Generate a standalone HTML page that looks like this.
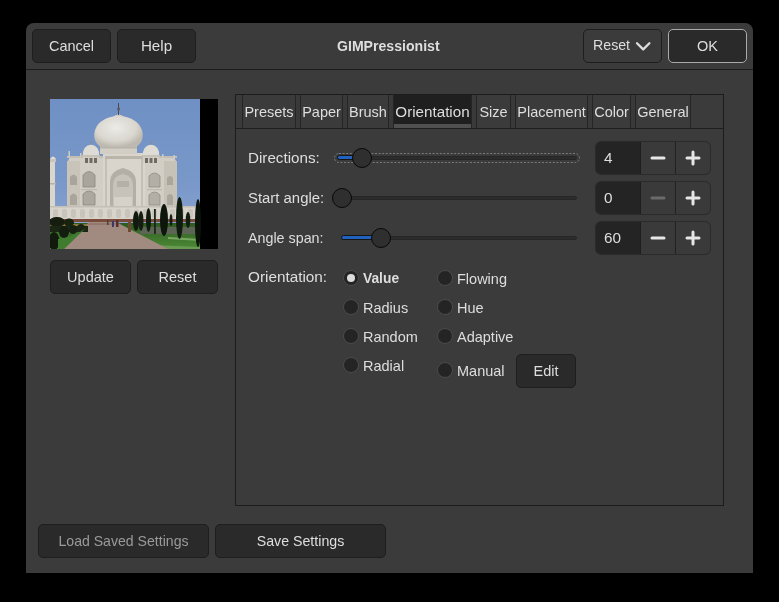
<!DOCTYPE html>
<html><head><meta charset="utf-8">
<style>
*{margin:0;padding:0;box-sizing:border-box}
html,body{width:779px;height:602px;background:#000;overflow:hidden}
body{position:relative;font-family:"Liberation Sans",sans-serif;font-size:14.5px;color:#dedede}
.abs{position:absolute}
.btn,.lbl,.tab{will-change:transform}
#win{position:absolute;left:26px;top:23px;width:727px;height:550px;background:#3b3b3b;border-radius:8px 8px 0 0}
#sep{position:absolute;left:26px;top:69px;width:727px;height:1px;background:#1c1c1c}
.btn{position:absolute;background:#2a2a2a;border:1px solid #1e1e1e;border-radius:5px;display:flex;align-items:center;justify-content:center;white-space:nowrap}
.lbl{position:absolute;white-space:nowrap;line-height:1}
.nb{position:absolute;left:235px;top:94px;width:489px;height:412px;border:1px solid #1c1c1c}
.tabstrip{position:absolute;left:236px;top:95px;width:487px;height:34px;border-bottom:1px solid #1e1e1e}
.tab{position:absolute;top:95px;height:33px;border-left:1px solid #252525;border-right:1px solid #252525;display:flex;align-items:center;justify-content:center;white-space:nowrap}
.tab.act{background:#1f1f1f}
.trough{position:absolute;height:4px;border-radius:2px;background:#2c2c2c;border:1px solid #262626}
.fill{position:absolute;height:5px;border-radius:2.5px;background:#2062bd;border:1px solid #151515}
.knob{position:absolute;width:20px;height:20px;border-radius:50%;background:#2f2f2f;border:1.6px solid #080808}
.spin{position:absolute;left:595px;width:116px;height:34px;border:1px solid #2a2a2a;border-radius:6px;background:#3a3a3a;overflow:hidden}
.spin .ent{position:absolute;left:0;top:0;width:44px;height:32px;background:#242424}
.spin .b1{position:absolute;left:44px;top:0;width:35px;height:32px;border-left:1px solid #1e1e1e}
.spin .b2{position:absolute;left:79px;top:0;width:36px;height:32px;border-left:1px solid #222}
.radio{position:absolute;width:16px;height:16px;border-radius:50%;background:#242424;border:1px solid #4b4b4b}
</style></head><body>
<div id="win"></div>
<div id="sep"></div>

<div class="btn" style="left:32px;top:29px;width:79px;height:34px">Cancel</div>
<div class="btn" style="left:117px;top:29px;width:79px;height:34px;font-size:15.2px;padding-bottom:1.5px">Help</div>
<div class="lbl" style="left:337px;top:38.8px;font-weight:bold;font-size:14.1px">GIMPressionist</div>
<div class="btn" style="left:583px;top:29px;width:79px;height:34px;background:#3b3b3b;border-color:#1e1e1e"></div>
<div class="lbl" style="left:593px;top:38px;font-size:14.2px">Reset</div>
<svg class="abs" style="left:634px;top:40px" width="18" height="12" viewBox="0 0 18 12"><path d="M3 3.2 L9.2 9.4 L15.4 3.2" fill="none" stroke="#dedede" stroke-width="2.3" stroke-linecap="round" stroke-linejoin="round"/></svg>
<div class="btn" style="left:668px;top:29px;width:79px;height:34px;border-color:#aaaaaa">OK</div>

<svg class="abs" style="left:50px;top:99px" width="168" height="150" viewBox="0 0 168 150">
<defs>
<linearGradient id="sky" x1="0" y1="0" x2="0" y2="1"><stop offset="0" stop-color="#6f90c4"/><stop offset="0.6" stop-color="#7a99ca"/><stop offset="1" stop-color="#93aad3"/></linearGradient>
<radialGradient id="dome" cx="0.45" cy="0.4" r="0.6"><stop offset="0" stop-color="#ecebe6"/><stop offset="0.7" stop-color="#d9d6cf"/><stop offset="1" stop-color="#bdb9b0"/></radialGradient>
<linearGradient id="grass" x1="0" y1="0" x2="0" y2="1"><stop offset="0" stop-color="#2f5a22"/><stop offset="1" stop-color="#4c8a36"/></linearGradient>
</defs>
<rect width="168" height="150" fill="#000"/>
<rect width="150" height="150" fill="url(#sky)"/>
<!-- minaret left -->
<rect x="0" y="63" width="5" height="45" fill="#d9d6ce"/>
<rect x="0" y="60" width="6" height="3" fill="#c9c5bc"/>
<path d="M0 60 Q3 55 6 60 Z" fill="#e0ddd6"/>
<rect x="0" y="84" width="6" height="1.5" fill="#b5b1a8"/>
<!-- building main block -->
<path d="M17 64 L20 58 L124 58 L127 64 L127 108 L17 108 Z" fill="#d2cec5"/>
<rect x="17" y="57" width="110" height="2" fill="#c2beb4"/>
<!-- pinnacles -->
<rect x="18.5" y="52" width="1.5" height="6" fill="#cfcbc2"/>
<rect x="30" y="54" width="1.5" height="4" fill="#cfcbc2"/>
<rect x="112" y="55" width="1.5" height="4" fill="#cfcbc2"/>
<rect x="123.5" y="56" width="1.5" height="5" fill="#cfcbc2"/>
<!-- chamfer shading -->
<rect x="17" y="62" width="13" height="46" fill="#c8c4ba"/>
<rect x="114" y="62" width="13" height="46" fill="#c6c2b8"/>
<!-- side bays -->
<path d="M33 88 L33 76 Q39 69 45 76 L45 88 Z" fill="#a9a59c" stroke="#8c887f" stroke-width="0.8"/>
<path d="M33 106 L33 95 Q39 89 45 95 L45 106 Z" fill="#aca89f" stroke="#8c887f" stroke-width="0.8"/>
<path d="M99 88 L99 77 Q104.5 71 110 77 L110 88 Z" fill="#b3afa6" stroke="#918d84" stroke-width="0.8"/>
<path d="M99 106 L99 96 Q104.5 90 110 96 L110 106 Z" fill="#b3afa6" stroke="#918d84" stroke-width="0.8"/>
<path d="M20 86 L20 78 Q23.5 73 27 78 L27 86 Z" fill="#a9a59d"/>
<path d="M20 106 L20 97 Q23.5 92 27 97 L27 106 Z" fill="#a9a59d"/>
<path d="M117 86 L117 79 Q120 75 123 79 L123 86 Z" fill="#aaa69e"/>
<path d="M117 106 L117 97 Q120 93 123 97 L123 106 Z" fill="#aaa69e"/>
<rect x="31" y="90" width="16" height="1.2" fill="#bdb9b0"/>
<rect x="97" y="90" width="15" height="1.2" fill="#bdb9b0"/>
<!-- central pishtaq -->
<rect x="53" y="54" width="42" height="54" fill="#d9d5cc"/>
<rect x="55" y="57" width="38" height="3" fill="#b9b5ab"/>
<rect x="55" y="60" width="2" height="48" fill="#c4c0b6"/>
<rect x="91" y="60" width="2" height="48" fill="#c4c0b6"/>
<path d="M60 108 L60 83 Q60 72 73 69 Q86 72 86 83 L86 108 Z" fill="#b3afa6"/>
<path d="M63 108 L63 86 Q63 77 73 75 Q83 77 83 86 L83 108 Z" fill="#c7c3ba"/>
<rect x="67" y="82" width="12" height="6" fill="#b5b1a8"/>
<rect x="64" y="98" width="18" height="10" fill="#d6d2ca"/>
<!-- drum -->
<rect x="50" y="46" width="37" height="9" fill="#d2cec5"/>
<rect x="50" y="48" width="37" height="1.5" fill="#b8b4aa"/>
<!-- main dome -->
<path d="M51 48 C44 44 43 36 45.5 30 C48.5 22 57 18.5 63 17.5 Q68.5 14 74 17.5 C80 18.5 88.5 22 91.5 30 C94 36 93 44 86 48 Z" fill="url(#dome)"/>
<path d="M66.5 17 Q68.5 12 70.5 17 Z" fill="#cfcbc3"/>
<rect x="68" y="4" width="1" height="12" fill="#4a4a4a"/>
<ellipse cx="68.6" cy="10" rx="1.3" ry="1.8" fill="#555"/>
<!-- small domes / chhatris -->
<path d="M33 57 Q32 47 41 45.5 Q50 47 49 57 Z" fill="#dedbd4"/>
<path d="M93 57 Q92 47 101 45.5 Q110 47 109 57 Z" fill="#dedbd4"/>
<rect x="40.5" y="42" width="1" height="4" fill="#888"/>
<rect x="100.5" y="42" width="1" height="4" fill="#888"/>
<rect x="32" y="56" width="18" height="2" fill="#c6c2b8"/>
<rect x="92" y="56" width="18" height="2" fill="#c6c2b8"/>
<rect x="33" y="58" width="16" height="6" fill="#d2cec5"/>
<rect x="93" y="58" width="16" height="6" fill="#d2cec5"/>
<rect x="35" y="59" width="3" height="5" fill="#6f6b64"/><rect x="39.5" y="59" width="3" height="5" fill="#6f6b64"/><rect x="44" y="59" width="3" height="5" fill="#6f6b64"/>
<rect x="95" y="59" width="3" height="5" fill="#6f6b64"/><rect x="99.5" y="59" width="3" height="5" fill="#6f6b64"/><rect x="104" y="59" width="3" height="5" fill="#6f6b64"/>
<!-- plinth -->
<rect x="0" y="107" width="147" height="14" fill="#d8d4cb"/>
<rect x="0" y="107" width="147" height="1.5" fill="#c4c0b7"/>
<rect x="3" y="110" width="5" height="9" rx="2" fill="#c8c4bb"/><rect x="12" y="110" width="5" height="9" rx="2" fill="#c8c4bb"/><rect x="21" y="110" width="5" height="9" rx="2" fill="#c8c4bb"/><rect x="30" y="110" width="5" height="9" rx="2" fill="#c8c4bb"/><rect x="39" y="110" width="5" height="9" rx="2" fill="#c8c4bb"/><rect x="48" y="110" width="5" height="9" rx="2" fill="#c8c4bb"/><rect x="57" y="110" width="5" height="9" rx="2" fill="#c8c4bb"/><rect x="66" y="110" width="5" height="9" rx="2" fill="#c8c4bb"/><rect x="75" y="110" width="5" height="9" rx="2" fill="#c8c4bb"/><rect x="84" y="110" width="5" height="9" rx="2" fill="#c8c4bb"/><rect x="93" y="110" width="5" height="9" rx="2" fill="#c8c4bb"/><rect x="102" y="110" width="5" height="9" rx="2" fill="#c8c4bb"/><rect x="111" y="110" width="5" height="9" rx="2" fill="#c8c4bb"/><rect x="120" y="110" width="5" height="9" rx="2" fill="#c8c4bb"/><rect x="129" y="110" width="5" height="9" rx="2" fill="#c8c4bb"/><rect x="138" y="110" width="5" height="9" rx="2" fill="#c8c4bb"/>
<rect x="0" y="120" width="147" height="3" fill="#7a4a3a"/>
<!-- base grass / gardens -->
<rect x="0" y="124" width="150" height="26" fill="url(#grass)"/>
<rect x="90" y="128" width="55" height="7" fill="#5d6656"/>
<path d="M118 138 L150 140 L150 142 L118 140 Z" fill="#7aa862"/>
<path d="M100 146 L150 148 L150 150 L100 150 Z" fill="#6a9a52"/>
<!-- path -->
<path d="M39 123 L66 123 L118 150 L14 150 Z" fill="#a18b80"/>
<path d="M39 124 L66 124 L70 126 L37 126 Z" fill="#95786c"/>
<!-- left garden -->
<rect x="0" y="125" width="37" height="4" fill="#8a7a3a"/>
<ellipse cx="7" cy="123" rx="8" ry="5" fill="#141d0e"/>
<ellipse cx="19" cy="123.5" rx="5" ry="4" fill="#18220f"/>
<rect x="0" y="127" width="38" height="6" fill="#1c2614"/>
<ellipse cx="4" cy="142" rx="5.5" ry="9" fill="#111a0c"/>
<ellipse cx="14" cy="133" rx="5" ry="6" fill="#141e10"/>
<ellipse cx="23" cy="130.5" rx="4" ry="4.5" fill="#172112"/>
<ellipse cx="31" cy="128" rx="3.5" ry="3" fill="#1a2514"/>
<path d="M8 150 L8 140 L20 138 L30 133 L36 129 L14 150 Z" fill="#3f7c2f"/>
<!-- cypress trees -->
<ellipse cx="86" cy="122" rx="3" ry="10" fill="#111a0f"/>
<ellipse cx="91" cy="122" rx="2.5" ry="10" fill="#131d10"/>
<ellipse cx="98.5" cy="121" rx="2.5" ry="12" fill="#111a0f"/>
<rect x="104" y="110" width="1.8" height="25" fill="#1c2618"/>
<ellipse cx="114" cy="121" rx="4" ry="16" fill="#0e160c"/>
<ellipse cx="121" cy="121" rx="1.5" ry="6" fill="#141d10"/>
<ellipse cx="129.5" cy="119" rx="3.5" ry="21" fill="#111a0f"/>
<ellipse cx="138" cy="121" rx="2.3" ry="8" fill="#131c10"/>
<ellipse cx="148" cy="124" rx="3" ry="24" fill="#0b120a"/>
<!-- people -->
<rect x="78" y="123" width="3" height="10" fill="#6a4c30"/>
<rect x="66" y="121" width="2.5" height="7" fill="#5a2e2e"/>
<rect x="62" y="122" width="2" height="6" fill="#3c3a6a"/>
<rect x="57" y="121" width="1.5" height="5" fill="#444"/>
</svg>

<div class="btn" style="left:50px;top:260px;width:81px;height:34px">Update</div>
<div class="btn" style="left:137px;top:260px;width:81px;height:34px">Reset</div>

<div class="nb"></div>
<div class="tabstrip"></div>
<div class="tab" style="left:242px;width:54px">Presets</div>
<div class="abs" style="left:296px;top:95px;width:4px;height:33px;background:#393939"></div>
<div class="tab" style="left:300px;width:43px">Paper</div>
<div class="abs" style="left:343px;top:95px;width:4px;height:33px;background:#393939"></div>
<div class="tab" style="left:347px;width:42px">Brush</div>
<div class="abs" style="left:389px;top:95px;width:4px;height:33px;background:#393939"></div>
<div class="tab act" style="left:393px;width:79px;font-size:15.2px;padding-bottom:1px">Orientation</div>
<div class="abs" style="left:472px;top:95px;width:4px;height:33px;background:#393939"></div>
<div class="tab" style="left:476px;width:35px">Size</div>
<div class="abs" style="left:511px;top:95px;width:4px;height:33px;background:#393939"></div>
<div class="tab" style="left:515px;width:73px">Placement</div>
<div class="abs" style="left:588px;top:95px;width:4px;height:33px;background:#393939"></div>
<div class="tab" style="left:592px;width:39px">Color</div>
<div class="abs" style="left:631px;top:95px;width:4px;height:33px;background:#393939"></div>
<div class="tab" style="left:635px;width:56px">General</div>
<div class="abs" style="left:394px;top:124px;width:77px;height:4px;background:#505050"></div>
<div class="lbl" style="left:248px;top:149.7px;font-size:15.2px">Directions:</div>
<div class="lbl" style="left:248px;top:191px;font-size:14.9px">Start angle:</div>
<div class="lbl" style="left:248px;top:231px;font-size:14.3px">Angle span:</div>
<svg class="abs" style="left:333px;top:152px" width="248" height="12"><rect x="1.5" y="1.5" width="245" height="9" rx="4.5" fill="none" stroke="#7a7a7a" stroke-width="1" stroke-dasharray="2 1.6"/></svg>
<div class="trough" style="left:337px;top:156px;width:240px"></div>
<div class="fill" style="left:337px;top:155px;width:30px"></div>
<div class="knob" style="left:352px;top:148px"></div>
<div class="trough" style="left:342px;top:196px;width:235px"></div>
<div class="knob" style="left:332px;top:188px"></div>
<div class="trough" style="left:341px;top:236px;width:236px"></div>
<div class="fill" style="left:341px;top:235px;width:40px"></div>
<div class="knob" style="left:371px;top:228px"></div>
<div class="spin" style="top:141px"><div class="ent"></div><div class="b1"></div><div class="b2"></div></div>
<div class="lbl" style="left:603.5px;top:149.5px;font-size:15.3px">4</div>
<svg class="abs" style="left:645px;top:141px" width="66" height="34"><path d="M7 16.900000000000006 H19" stroke="#e6e6e6" stroke-width="3" stroke-linecap="round"/><path d="M42 16.900000000000006 H54 M48 10.900000000000006 V22.900000000000006" stroke="#e6e6e6" stroke-width="3" stroke-linecap="round"/></svg>
<div class="spin" style="top:181px"><div class="ent"></div><div class="b1"></div><div class="b2"></div></div>
<div class="lbl" style="left:603.5px;top:189.5px;font-size:15.3px">0</div>
<svg class="abs" style="left:645px;top:181px" width="66" height="34"><path d="M7 16.900000000000006 H19" stroke="#6a6a6a" stroke-width="3" stroke-linecap="round"/><path d="M42 16.900000000000006 H54 M48 10.900000000000006 V22.900000000000006" stroke="#e6e6e6" stroke-width="3" stroke-linecap="round"/></svg>
<div class="spin" style="top:221px"><div class="ent"></div><div class="b1"></div><div class="b2"></div></div>
<div class="lbl" style="left:603.5px;top:229.5px;font-size:15.3px">60</div>
<svg class="abs" style="left:645px;top:221px" width="66" height="34"><path d="M7 16.900000000000006 H19" stroke="#e6e6e6" stroke-width="3" stroke-linecap="round"/><path d="M42 16.900000000000006 H54 M48 10.900000000000006 V22.900000000000006" stroke="#e6e6e6" stroke-width="3" stroke-linecap="round"/></svg>
<div class="lbl" style="left:248px;top:268.7px;font-size:15.3px">Orientation:</div>
<div class="radio" style="left:343px;top:270px"></div>
<div class="lbl" style="left:363px;top:272px;font-weight:bold;font-size:13.8px">Value</div>
<div class="radio" style="left:343px;top:299px"></div>
<div class="lbl" style="left:363px;top:301px;">Radius</div>
<div class="radio" style="left:343px;top:328px"></div>
<div class="lbl" style="left:363px;top:330px;">Random</div>
<div class="radio" style="left:343px;top:357px"></div>
<div class="lbl" style="left:363px;top:359px;">Radial</div>
<div class="radio" style="left:437px;top:270px"></div>
<div class="lbl" style="left:457px;top:272px">Flowing</div>
<div class="radio" style="left:437px;top:299px"></div>
<div class="lbl" style="left:457px;top:301px">Hue</div>
<div class="radio" style="left:437px;top:328px"></div>
<div class="lbl" style="left:457px;top:330px">Adaptive</div>
<div class="radio" style="left:437px;top:362px"></div>
<div class="lbl" style="left:457px;top:364px">Manual</div>
<div class="abs" style="left:347px;top:274px;width:8px;height:8px;border-radius:50%;background:#dcdcdc"></div>
<div class="btn" style="left:516px;top:354px;width:60px;height:34px">Edit</div>
<div class="btn" style="left:38px;top:524px;width:171px;height:34px;color:#9a9a9a;font-size:14.1px">Load Saved Settings</div>
<div class="btn" style="left:215px;top:524px;width:171px;height:34px;font-size:14.2px">Save Settings</div>
</body></html>
